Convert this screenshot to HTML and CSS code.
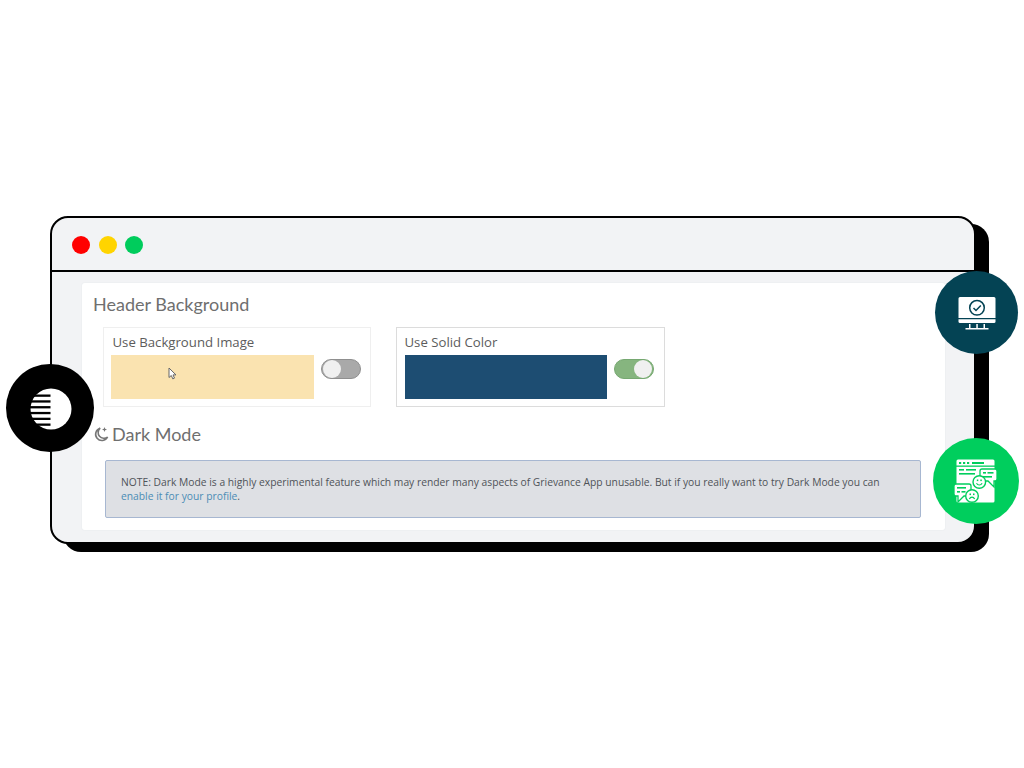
FILE: index.html
```html
<!DOCTYPE html>
<html lang="en">
<head>
<meta charset="utf-8">
<title>Header Background</title>
<link rel="stylesheet" href="styles.css">
</head>
<body>
<main class="stage">
  <section class="window">
    <header class="titlebar">
      <span class="dot dot-red"></span>
      <span class="dot dot-yellow"></span>
      <span class="dot dot-green"></span>
    </header>
    <div class="panel">
      <h2 class="heading">Header Background</h2>
      <div class="cards">
        <div class="card">
          <div class="card-label">Use Background Image</div>
          <div class="card-row">
            <div class="swatch swatch-image">
              <svg class="cursor" width="9" height="13" viewBox="0 0 9 13"><path class="cursor-path" d="M1 1v9.500l2.300-2 1.500 3.400 1.700-.8-1.500-3.200h3z"/></svg>
            </div>
            <span class="toggle toggle-off"><span class="knob"></span></span>
          </div>
        </div>
        <div class="card card-active">
          <div class="card-label">Use Solid Color</div>
          <div class="card-row">
            <div class="swatch swatch-solid"></div>
            <span class="toggle toggle-on"><span class="knob"></span></span>
          </div>
        </div>
      </div>
      <h2 class="heading heading-dark">
        <svg class="moon" width="15" height="16" viewBox="0 0 15 16"><path class="moon-path" d="M6.200 2.200A6.300 6.300 0 1 0 13.600 11 5.600 5.600 0 0 1 6.200 2.200z"/><path class="moon-star" d="M10.500 1l.7 1.800 1.800.7-1.800.7-.7 1.800-.7-1.800-1.800-.7 1.800-.7z"/></svg>
        Dark Mode
      </h2>
      <div class="note">NOTE: Dark Mode is a highly experimental feature which may render many aspects of Grievance App unusable. But if you really want to try Dark Mode you can <a class="note-link" href="#">enable it for your profile</a>.</div>
    </div>

    <div class="badge badge-black">
      <svg class="halftone" width="42" height="42" viewBox="0 0 42 42">
        <circle class="w" cx="21" cy="21" r="20.500"/>
        <rect x="0" y="6.500" width="20.500" height="2.300"/>
        <rect x="0" y="12.300" width="20.500" height="2.300"/>
        <rect x="0" y="18.100" width="20.500" height="2.300"/>
        <rect x="0" y="23.900" width="20.500" height="2.300"/>
        <rect x="0" y="29.700" width="20.500" height="2.300"/>
        <rect x="0" y="35.500" width="20.500" height="2.300"/>
      </svg>
    </div>

    <div class="badge badge-teal">
      <svg width="38" height="34" viewBox="0 0 38 34">
        <path class="w" d="M2 0h34a1.500 1.500 0 0 1 1.500 1.500V21H.5V1.500A1.500 1.500 0 0 1 2 0z"/>
        <path class="w" d="M.5 22.300h37v2.200a1.500 1.500 0 0 1-1.500 1.500H2a1.500 1.500 0 0 1-1.500-1.500z"/>
        <rect class="w" x="11" y="27" width="1.500" height="4"/>
        <rect class="w" x="18.300" y="27" width="1.500" height="4"/>
        <rect class="w" x="25.500" y="27" width="1.500" height="4"/>
        <rect class="w" x="7.500" y="31" width="23" height="1.500"/>
        <circle class="ts" cx="19" cy="10.800" r="7.300"/>
        <path class="ts" d="M15.500 11l2.500 2.500 4.800-5"/>
      </svg>
    </div>

    <div class="badge badge-green">
      <svg class="feedback" width="40" height="45" viewBox="0 0 40 45">
        <path class="w" d="M2 .5h35a1.500 1.500 0 0 1 1.500 1.500v40a1.500 1.500 0 0 1-1.500 1.500H2A1.500 1.500 0 0 1 .5 42V2A1.500 1.500 0 0 1 2 .5z"/>
        <rect class="g" x="0" y="6.500" width="39" height="1.300"/>
        <rect class="g" x="3" y="3" width="2.200" height="2"/><rect class="g" x="7" y="3" width="2.200" height="2"/><rect class="g" x="11" y="3" width="2.200" height="2"/><rect class="g" x="16" y="3" width="12" height="2"/>
        <rect class="g" x="3" y="10" width="5" height="1.600"/><rect class="g" x="10" y="10" width="10" height="1.600"/><rect class="g" x="3" y="14" width="16" height="1.600"/>
        <path class="bub" d="M26 10h13a2 2 0 0 1 2 2v8a2 2 0 0 1-2 2h-1v6l-6-6h-6a2 2 0 0 1-2-2v-8a2 2 0 0 1 2-2z"/>
        <rect class="g" x="27" y="13" width="3" height="1.600"/><rect class="g" x="31.500" y="13" width="6" height="1.600"/><rect class="g" x="27" y="17" width="9" height="1.600"/>
        <circle class="face" cx="23.300" cy="23" r="6.300"/>
        <path class="fs" d="M20.500 24.200c1.400 2.400 4.200 2.400 5.600 0"/><rect class="g" x="20.800" y="20.500" width="1.500" height="1.600"/><rect class="g" x="24.300" y="20.500" width="1.500" height="1.600"/>
        <path class="bub" d="M0 25h13a2 2 0 0 1 2 2v8a2 2 0 0 1-2 2H8l-6 6v-6H0a2 2 0 0 1-2-2v-8a2 2 0 0 1 2-2z"/>
        <rect class="g" x="1" y="28" width="9" height="1.600"/><rect class="g" x="1" y="32" width="3" height="1.600"/><rect class="g" x="5.500" y="32" width="4" height="1.600"/>
        <circle class="face" cx="16" cy="37" r="6.300"/>
        <path class="fs" d="M13.300 40c1.400-2.400 4-2.400 5.400 0"/><rect class="g" x="13.500" y="34.500" width="1.500" height="1.600"/><rect class="g" x="17" y="34.500" width="1.500" height="1.600"/>
      </svg>
    </div>
  </section>
</main>
</body>
</html>
```

FILE: styles.css
```css
* { box-sizing: border-box; }
html, body { margin: 0; height: 100%; background: #fff; overflow: hidden; }
.stage { padding: 216px 0 0 50px; }
.window {
  position: relative;
  width: 926px;
  height: 328px;
  background: #f2f3f5;
  border: 2px solid #000;
  border-radius: 18px;
  box-shadow: 13px 8px 0 #000;
}
.titlebar {
  display: flex;
  align-items: center;
  gap: 8.500px;
  height: 54px;
  padding: 2px 0 0 20px;
  border-bottom: 2px solid #000;
}
.dot { width: 18px; height: 18px; border-radius: 50%; }
.dot-red { background: #ff0000; }
.dot-yellow { background: #ffd400; }
.dot-green { background: #00cc5c; }
.panel {
  margin: 11px 29px 0 30px;
  height: 247px;
  padding: 10px 0 0 11px;
  background: #fff;
  border-radius: 3px;
  box-shadow: 0 0 0 1px #eef0f2;
}
.heading {
  margin: 0;
  font: 400 18px/22px Lato, sans-serif;
  color: #6f6f6f;
}
.cards { display: flex; gap: 25px; margin: 12px 0 0 10px; }
.card {
  width: 268px;
  height: 80px;
  padding: 4px 6px 0 6.500px;
  border: 1.500px solid #efefef;
}
.card-active { width: 268.500px; border-color: #dcdcdc; padding-left: 7.500px; }
.card-label {
  height: 23px;
  padding-left: 2px;
  font: 400 13.200px/20px "Open Sans", sans-serif;
  color: #5c5c5c;
}
.card-active .card-label { padding-left: 0; }
.card-row { display: flex; align-items: flex-start; gap: 7px; }
.swatch { position: relative; height: 44px; flex: none; }
.swatch-image { width: 203px; background: #fae3b0; }
.swatch-solid { width: 202px; background: #1d4d72; }
.cursor { position: absolute; left: 57px; top: 12px; }
.cursor-path { fill: #fff; stroke: #666; stroke-width: 1; }
.toggle {
  display: flex;
  align-items: center;
  width: 40px;
  height: 20.500px;
  margin-top: 3.500px;
  padding: 1px;
  border-radius: 11px;
}
.toggle-off { background: #a9a9a9; border: 1px solid #8f8f8f; }
.toggle-on { background: #86b57f; border: 1px solid #76a871; justify-content: flex-end; }
.knob { width: 18px; height: 18px; border-radius: 50%; background: #f0f0f0; }
.heading-dark { display: flex; align-items: center; gap: 3px; margin: 16px 0 0 1px; }
.moon { flex: none; }
.moon-path { fill: none; stroke: #777; stroke-width: 1.600; }
.moon-star { fill: #777; }
.note {
  width: 816px;
  height: 58px;
  margin: 14.500px 0 0 12px;
  padding: 14px 15px 0 15px;
  background: #dee0e4;
  border: 1px solid #a7b7d1;
  border-radius: 2px;
  font: 400 10.300px/14px "Open Sans", sans-serif;
  color: #4f5358;
}
.note-link { color: #4b8cb5; text-decoration: none; }
.badge {
  position: absolute;
  display: flex;
  align-items: center;
  justify-content: center;
  border-radius: 50%;
}
.badge-black { left: -46px; top: 146px; width: 88px; height: 88px; background: #000; padding: 1px 0 0 2px; }
.badge-teal { left: 883px; top: 53px; width: 83px; height: 83px; background: #044354; padding-top: 2px; }
.badge-green { left: 881px; top: 220px; width: 86px; height: 86px; background: #00ce5d; }
.feedback { overflow: visible; }
.w { fill: #fff; }
.g { fill: #00ce5d; }
.ts { fill: none; stroke: #044354; stroke-width: 1.500; }
.bub { fill: #fff; stroke: #00ce5d; stroke-width: 1.300; }
.face { fill: #fff; stroke: #00ce5d; stroke-width: 1.400; }
.fs { fill: none; stroke: #00ce5d; stroke-width: 1.200; }
```
